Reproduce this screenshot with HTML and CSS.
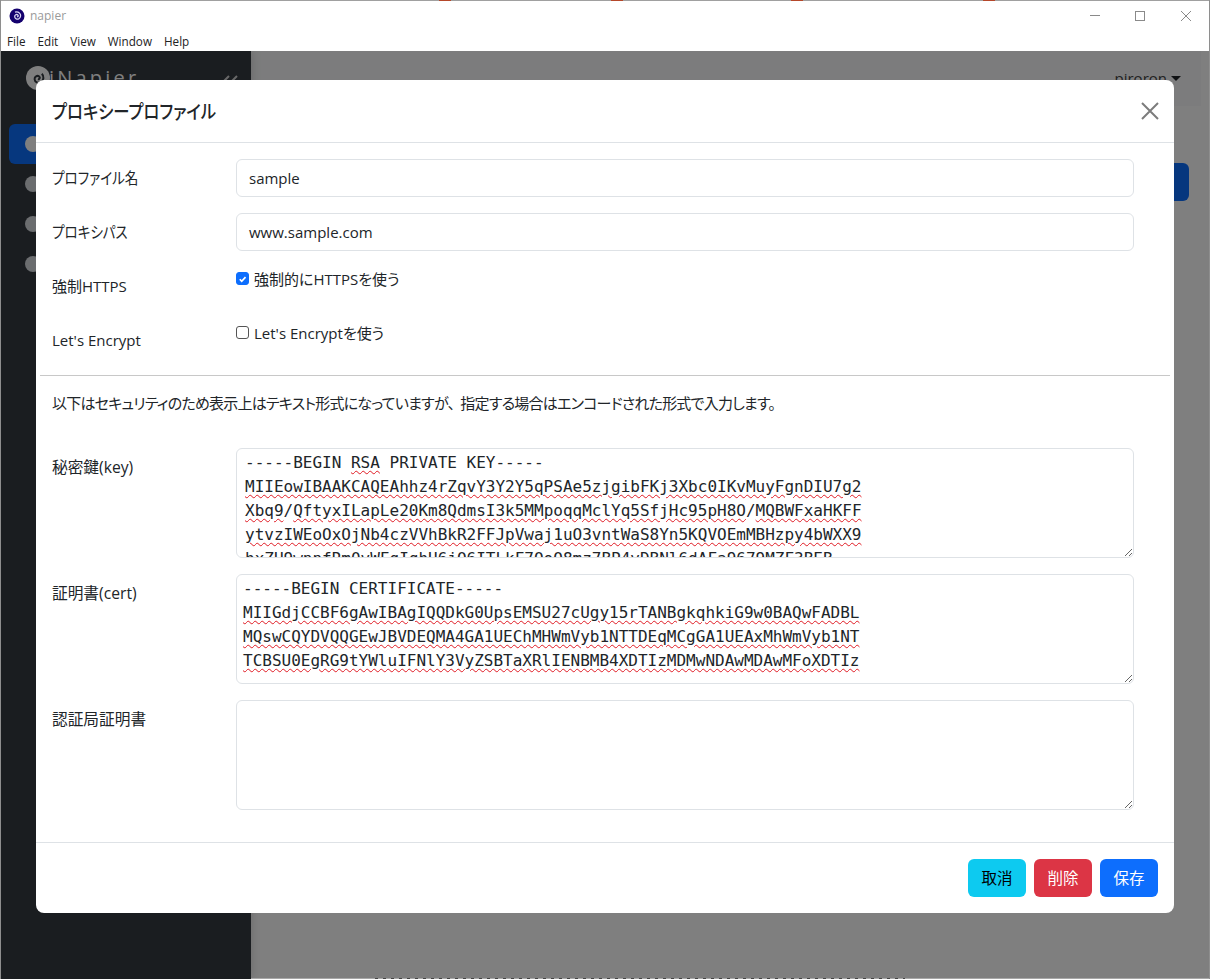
FILE: index.html
```html
<!DOCTYPE html>
<html lang="ja">
<head>
<meta charset="utf-8">
<title>napier</title>
<link rel="stylesheet" href="styles.css">
</head>
<body>
<div class="window">
  <div class="edge-top"><i></i><i></i><i></i><i></i></div>
  <header class="chrome">
    <div class="titlebar">
      <svg class="app-icon" width="16" height="16" viewBox="0 0 16 16"><circle cx="8" cy="8" r="7.500" fill="#14006e"/><path d="M8 8.600c1 .4 1.700-.9.8-1.700-1.300-1-3.200 0-3.100 1.800.1 2 2.500 3 4.200 2 2-1.200 2.300-4 .6-5.600-1.300-1.200-3-1.400-4.500-.9" fill="none" stroke="#dcd8f4" stroke-width="1.300"/></svg>
      <span class="app-name">napier</span>
      <div class="win-controls">
        <svg width="12" height="12" viewBox="0 0 12 12"><path d="M2 5.500h10" stroke="#8a8a8a" fill="none"/></svg>
        <svg width="12" height="12" viewBox="0 0 12 12"><rect x="1.500" y="1.500" width="9" height="9" stroke="#8a8a8a" fill="none"/></svg>
        <svg width="12" height="12" viewBox="0 0 12 12"><path d="M1 1l10 10M11 1L1 11" stroke="#8a8a8a" fill="none"/></svg>
      </div>
    </div>
    <nav class="menubar"><span>File</span><span>Edit</span><span>View</span><span>Window</span><span>Help</span></nav>
  </header>
  <div class="app">
    <aside class="sidebar">
      <div class="brand">
        <svg class="brand-logo" width="24" height="24" viewBox="0 0 24 24"><circle cx="12" cy="12" r="12" fill="#fff"/><path d="M12 13c1.500.6 2.500-1.300 1.200-2.500-2-1.500-4.800 0-4.600 2.700.2 3 3.700 4.500 6.300 3 3-1.800 3.400-6 .9-8.400" fill="none" stroke="#343a40" stroke-width="2"/></svg>
        <span class="brand-name">iNapier</span>
        <svg class="collapse" width="17" height="16" viewBox="0 0 17 16"><path d="M8 1L1 8l7 7M16 1L9 8l7 7" fill="none" stroke="#d0d0d0" stroke-width="2"/></svg>
      </div>
      <div class="nav-item active"><i></i></div>
      <div class="nav-item"><i></i></div>
      <div class="nav-item"><i></i></div>
      <div class="nav-item"><i></i></div>
    </aside>
    <main class="content">
      <div class="topbar"><span class="user">piroron</span><span class="caret"></span></div>
      <div class="action-row"><span class="action-btn"></span></div>
    </main>
    <div class="backdrop"></div>
    <section class="modal">
      <div class="modal-header">
        <h5>プロキシープロファイル</h5>
        <svg class="close" width="18" height="18" viewBox="0 0 18 18"><path d="M1 1l16 16M17 1L1 17" stroke="#7c7c7c" stroke-width="2" fill="none"/></svg>
      </div>
      <div class="modal-body">
        <div class="row"><label><span class="narrow">プロファイル名</span></label><div class="field"><div class="input">sample</div></div></div>
        <div class="row"><label><span class="narrow">プロキシパス</span></label><div class="field"><div class="input">www.sample.com</div></div></div>
        <div class="row check-row"><label>強制HTTPS</label><div class="field check-field"><span class="check on"><svg width="12" height="12" viewBox="0 0 20 20"><path d="M5 10.500l3.500 3.500 7-7.500" stroke="#fff" stroke-width="3" fill="none"/></svg></span><span>強制的にHTTPSを使う</span></div></div>
        <div class="row check-row"><label>Let's Encrypt</label><div class="field check-field"><span class="check"></span><span>Let's Encryptを使う</span></div></div>
      </div>
      <hr class="divider">
      <p class="note">以下はセキュリティのため表示上はテキスト形式になっていますが<span class="comma">、</span>指定する場合はエンコードされた形式で入力します。</p>
      <div class="modal-body pem">
        <div class="row area-row"><label>秘密鍵(key)</label><div class="field"><div class="textarea key">-----BEGIN <u>RSA</u> PRIVATE KEY-----
<u>MIIEowIBAAKCAQEAhhz4rZqvY3Y2Y5qPSAe5zjgibFKj3Xbc0IKvMuyFgnDIU7g2</u>
<u>Xbq9</u>/<u>QftyxILapLe20Km8QdmsI3k5MMpoqqMclYq5SfjHc95pH8O</u>/<u>MQBWFxaHKFF</u>
<u>ytvzIWEoOxOjNb4czVVhBkR2FFJpVwaj1uO3vntWaS8Yn5KQVOEmMBHzpy4bWXX9</u>
<u>hxZH9wnnfRm0vWFgIqhU6jQ6ITLkF7OoO8mz7BP4vDBNl6dAFa9679MZF3BEB</u></div></div></div>
        <div class="row area-row"><label>証明書(cert)</label><div class="field"><div class="textarea cert">-----BEGIN CERTIFICATE-----
<u>MIIGdjCCBF6gAwIBAgIQQDkG0UpsEMSU27cUgy15rTANBgkqhkiG9w0BAQwFADBL</u>
<u>MQswCQYDVQQGEwJBVDEQMA4GA1UEChMHWmVyb1NTTDEqMCgGA1UEAxMhWmVyb1NT</u>
<u>TCBSU0EgRG9tYWluIFNlY3VyZSBTaXRlIENBMB4XDTIzMDMwNDAwMDAwMFoXDTIz</u></div></div></div>
        <div class="row area-row"><label>認証局証明書</label><div class="field"><div class="textarea"></div></div></div>
      </div>
      <div class="modal-footer">
        <button class="btn info">取消</button>
        <button class="btn danger">削除</button>
        <button class="btn primary">保存</button>
      </div>
    </section>
  </div>
  <div class="edge-bottom"></div>
</div>
</body>
</html>
```
FILE: styles.css
```css
* { box-sizing: border-box; }
html, body { margin: 0; height: 100%; overflow: hidden; }
body {
  font-family: "Open Sans", "Noto Sans CJK JP", sans-serif;
  font-size: 15px;
  line-height: 24px;
  color: #212529;
  font-feature-settings: "palt";
}
.window { height: 979px; display: flex; flex-direction: column; position: relative; border: 1px solid #8e8e8e; border-top: 0; border-bottom: 0; background: #fff; }
.edge-top { flex: none; height: 1px; background: #a0a0a0; position: relative; }
.edge-top i { position: absolute; top: 0; width: 12px; height: 1px; background: #b5472a; }
.edge-top i:nth-child(1) { left: 438px; }
.edge-top i:nth-child(2) { left: 610px; }
.edge-top i:nth-child(3) { left: 790px; }
.edge-top i:nth-child(4) { left: 982px; }
.edge-bottom { position: absolute; left: 250px; right: 0; bottom: 0; height: 1px; background: #a8a8a8; }
.edge-bottom::after { content: ""; position: absolute; left: 124px; width: 530px; height: 1px; background: repeating-linear-gradient(90deg, #444 0 3px, #a8a8a8 3px 8px); }
.chrome { flex: none; height: 50px; background: #fff; }
.titlebar { height: 30px; display: flex; align-items: center; padding-left: 8px; }
.app-name { margin-left: 5px; font-size: 12px; color: #9a9a9a; }
.win-controls { margin-left: auto; display: flex; gap: 34px; padding-right: 17px; }
.menubar { height: 20px; display: flex; gap: 12px; padding-left: 6px; font-size: 11.700px; line-height: 21px; color: #222; }
.app { flex: 1; display: flex; position: relative; overflow: hidden; }
.sidebar { flex: none; width: 250px; background: #343a40; padding: 13px 8px 0; box-shadow: 0 0 10px rgba(0,0,0,.18); position: relative; }
.brand { display: flex; align-items: center; height: 28px; padding-left: 17px; color: #fff; }
.brand-name { margin-left: -1px; font-size: 20px; letter-spacing: 3.200px; }
.collapse { margin-left: auto; margin-right: 5px; margin-top: 9px; }
.nav-item { height: 40px; display: flex; align-items: center; padding-left: 16px; }
.nav-item i { width: 16px; height: 16px; border-radius: 50%; background: #d6dadf; }
.nav-item.active { margin-top: 32px; background: #0d6efd; border-radius: 6px; }
.nav-item.active i { background: #fff; }
.content { flex: 1; background: #fff; padding-right: 8px; }
.topbar { height: 55px; background: #f8f9fa; display: flex; align-items: center; justify-content: flex-end; padding-right: 20px; }
.user { color: #444; margin-top: -2px; }
.caret { margin-left: 4px; border: 5px solid transparent; border-top-color: #212529; border-bottom: 0; }
.action-row { display: flex; justify-content: flex-end; padding: 57px 12px 0 0; }
.action-btn { width: 40px; height: 38px; border-radius: 6px; background: #0d6efd; }
.backdrop { position: absolute; inset: 0; background: rgba(0,0,0,.5); }
.modal { position: absolute; left: 35px; top: 29px; width: 1138px; height: 833px; background: #fff; border-radius: 8px; display: flex; flex-direction: column; }
.modal-header { flex: none; height: 63px; display: flex; align-items: center; justify-content: space-between; padding: 0 15px 0 16px; border-bottom: 1px solid #dee2e6; }
.modal-header h5 { margin: 2px 0 0; font-size: 19px; font-weight: 500; line-height: 24px; transform: scaleX(.86); transform-origin: left center; }
.modal-body { padding: 16px 40px 0 16px; }
.row { display: flex; margin-bottom: 16px; }
.row label { flex: none; width: 184px; padding-top: 7px; }
.narrow { display: inline-block; font-size: 16px; transform: scaleX(.85); transform-origin: left center; margin-top: -1px; }
.field { flex: 1; }
.input { height: 38px; padding: 6px 12px; border: 1px solid #dee2e6; border-radius: 6px; font-size: 15px; color: #212529; }
.check-row { height: 38px; }
.check-row label { padding-top: 7px; }
.check-field { display: flex; align-items: flex-start; gap: 5px; line-height: 24px; }
.check { width: 13px; height: 13px; margin-top: 5px; border: 1px solid #555; border-radius: 3px; background: #fff; display: flex; align-items: center; justify-content: center; }
.check.on { background: #0d6efd; border-color: #0d6efd; }
.divider { margin: 0 4px; border: 0; border-top: 1px solid #c8c8c8; }
.note { margin: 15px 16px 0; letter-spacing: -.77px; }
.comma { margin-right: 6px; }
.pem { padding-top: 33px; }
.area-row { margin-bottom: 16px; }
.area-row label { padding-top: 7px; font-size: 15.700px; }
.textarea { height: 110px; padding: 2px 6px; border: 1px solid #dee2e6; border-radius: 6px; font-family: "DejaVu Sans Mono", monospace; font-size: 16px; line-height: 24px; white-space: pre; overflow: hidden; resize: vertical; font-feature-settings: normal; }
.textarea.key { padding-left: 8px; }
u { text-decoration: underline wavy #e01b24 1.300px; text-underline-offset: 2px; }
.modal-footer { margin-top: auto; flex: none; height: 71px; border-top: 1px solid #dee2e6; display: flex; align-items: center; justify-content: flex-end; gap: 8px; padding: 0 16px; }
.btn { width: 58px; height: 38px; border: 0; border-radius: 6px; font: inherit; font-size: 15.500px; }
.info { background: #0dcaf0; color: #000; }
.danger { background: #dc3545; color: #fff; }
.primary { background: #0d6efd; color: #fff; }
```
